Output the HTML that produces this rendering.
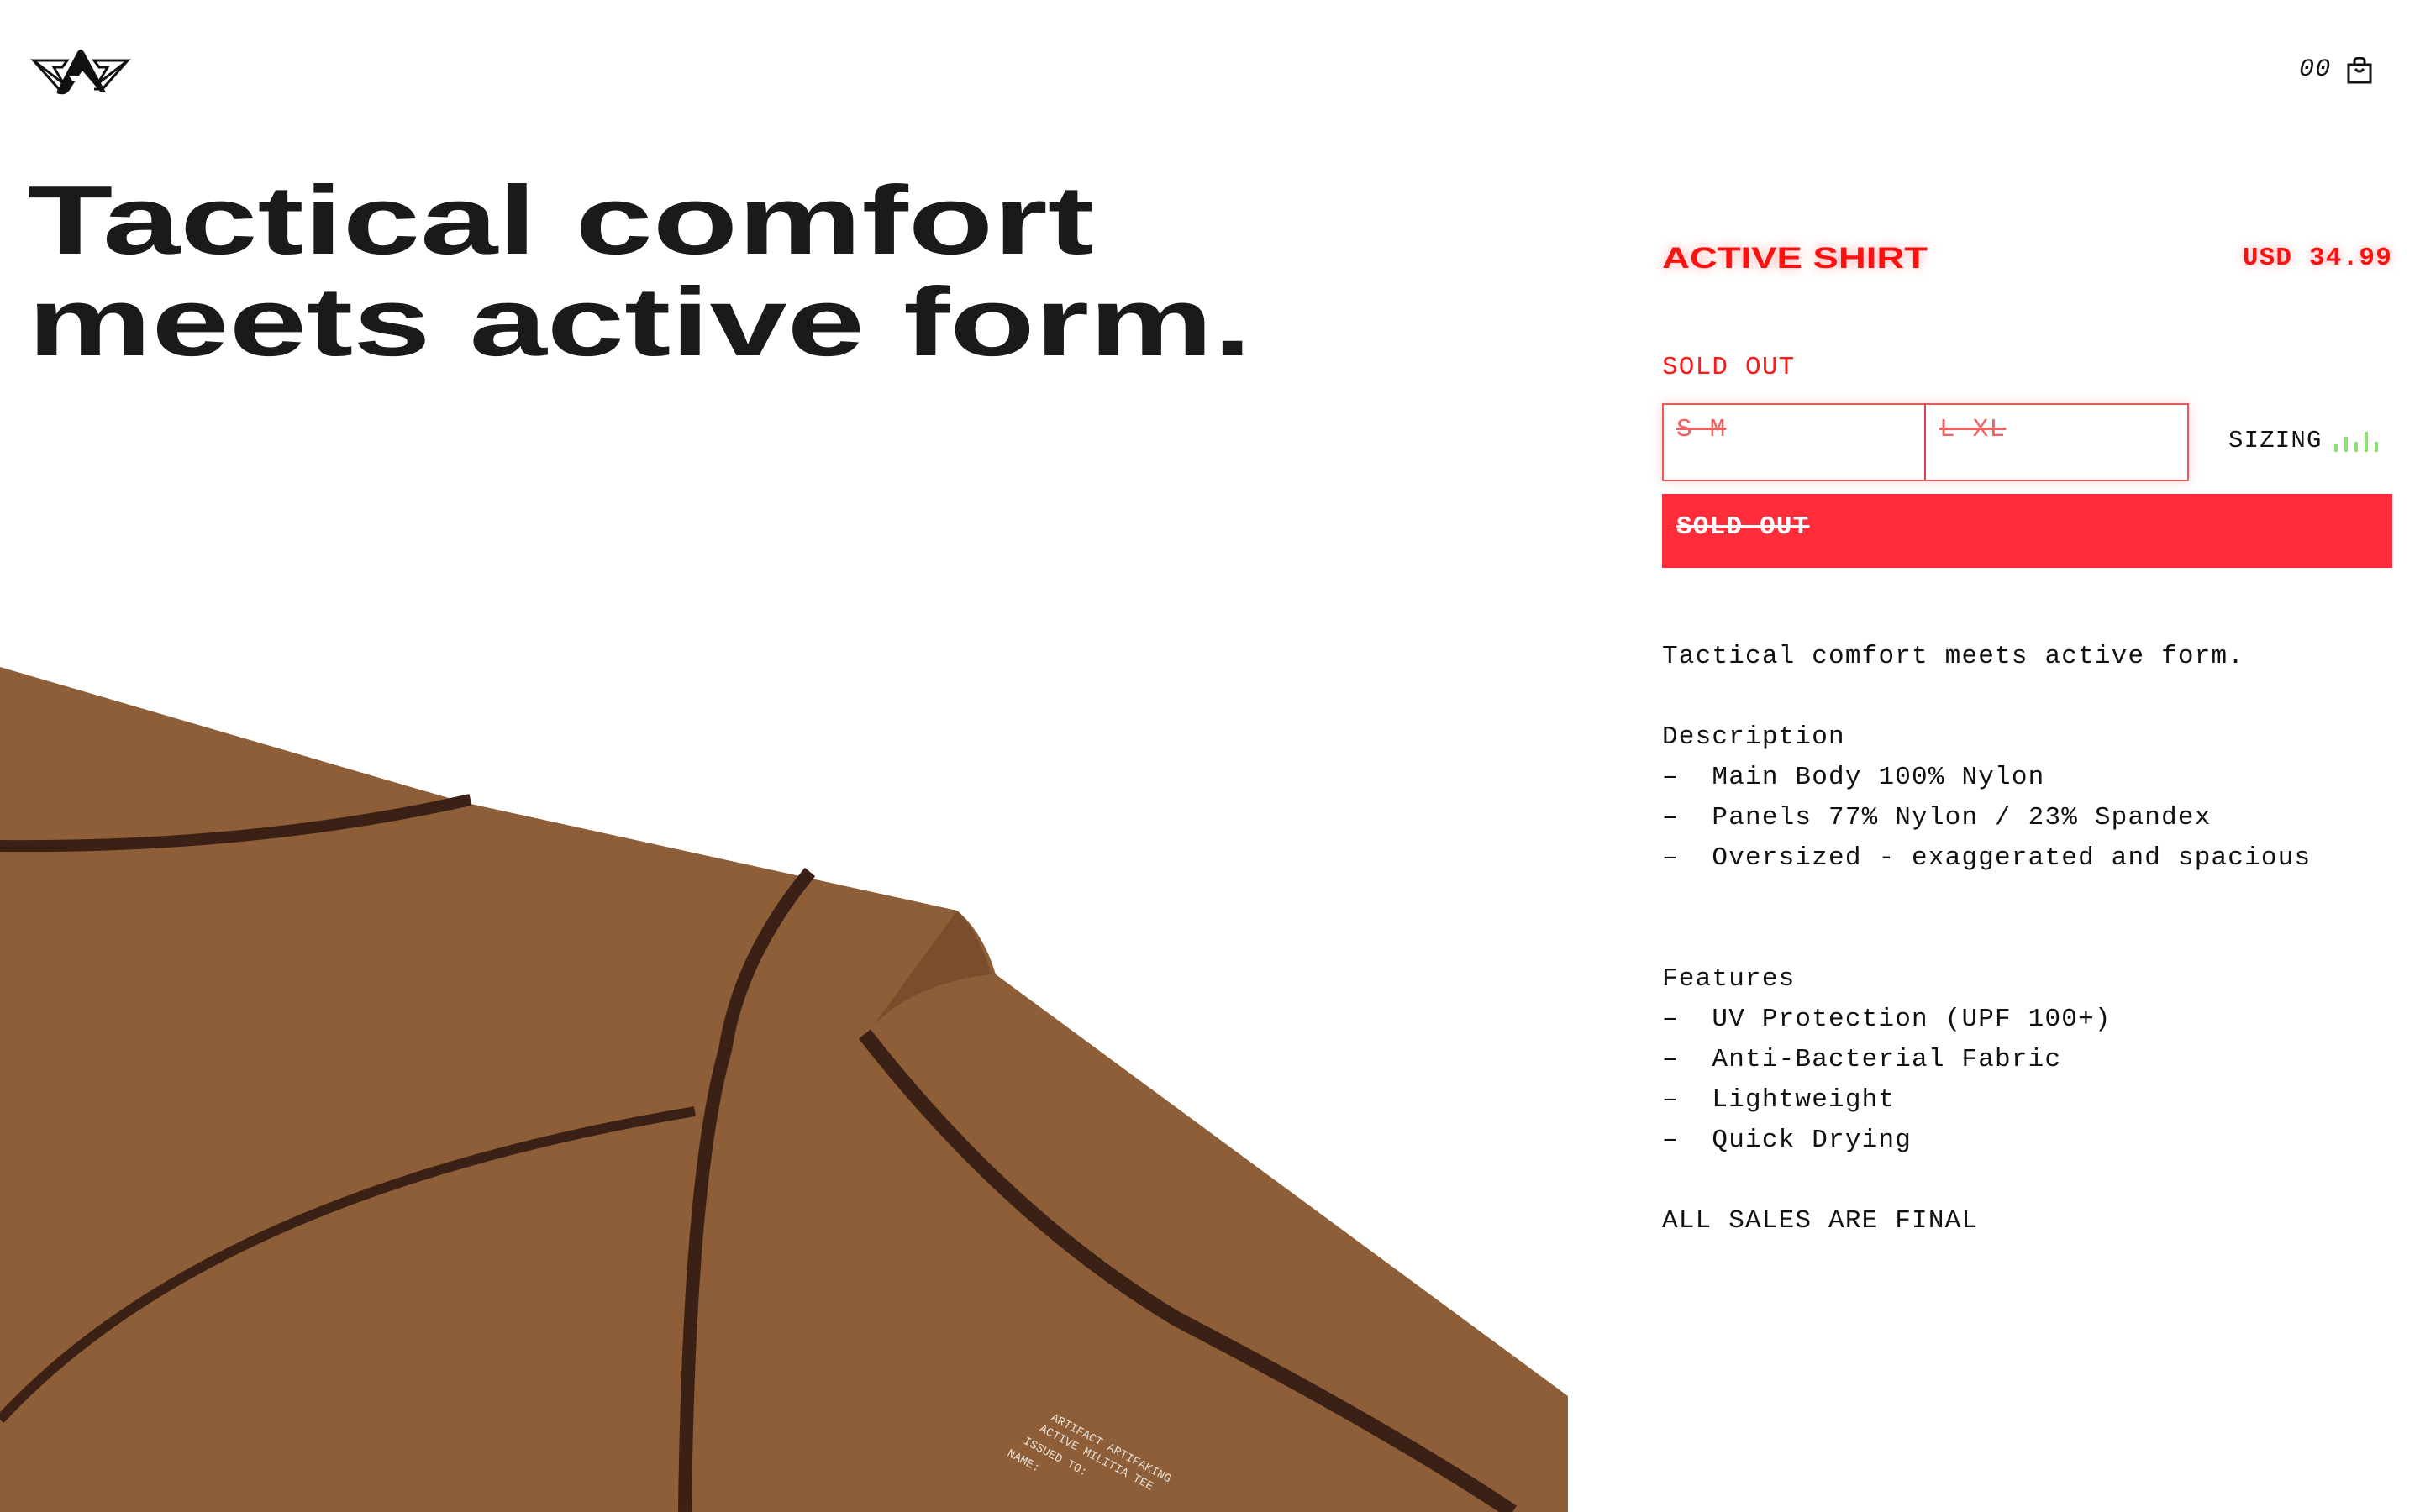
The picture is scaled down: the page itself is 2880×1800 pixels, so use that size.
<!DOCTYPE html>
<html><head><meta charset="utf-8"><style>
html,body{margin:0;padding:0;background:#fff;}
body{width:2880px;height:1800px;position:relative;overflow:hidden;font-family:"Liberation Mono",monospace;}
.h1{position:absolute;left:33px;top:202px;font-family:"Liberation Sans",sans-serif;font-weight:bold;font-size:116px;line-height:121px;color:#1a1a1a;transform:scaleX(1.43);transform-origin:0 0;letter-spacing:0px;white-space:nowrap;}
.abs{position:absolute;white-space:nowrap;}
.mono{font-family:"Liberation Mono",monospace;font-size:31px;letter-spacing:1.2px;color:#111;}
.red{color:#ff1010;text-shadow:0 0 12px rgba(255,0,0,.35);}
</style></head><body>
<svg class="abs" style="left:36px;top:56px" width="120" height="62" viewBox="0 0 120 62">
<path d="M4 16 H44 L38 24 H28 L40 44 Z" fill="none" stroke="#111" stroke-width="3"/>
<path d="M4 16 L34 50 H44" fill="none" stroke="#111" stroke-width="3"/>
<path d="M116 16 H76 L82 24 H92 L80 44 Z" fill="none" stroke="#111" stroke-width="3"/>
<path d="M116 16 L86 50 H76" fill="none" stroke="#111" stroke-width="3"/>
<path d="M32 52 L56 6 Q60 0 64 6 L90 54 L84 54 L62 28 L50 46 Q44 58 36 56 Q30 56 32 52 Z" fill="#111"/>
<path d="M46 34 H66 L60 40 H50 Z" fill="#fff"/>
</svg>
<div class="abs mono" style="left:2736px;top:66px;font-size:30px;font-style:italic">00</div>
<svg class="abs" style="left:2793px;top:68px" width="30" height="32" viewBox="0 0 30 32"><rect x="2" y="9" width="26" height="21" fill="none" stroke="#111" stroke-width="3"/><path d="M9 9 V5 Q9 1 15 1 Q21 1 21 5 V9 M10 14 Q15 20 20 14" fill="none" stroke="#111" stroke-width="3"/></svg>
<div class="h1">Tactical comfort<br>meets active form.</div>

<svg class="abs" style="left:0;top:0" width="1866" height="1800" viewBox="0 0 1866 1800">
<path d="M0 794 L551 955 L1139 1084 Q1170 1110 1185 1160 L1866 1662 L1866 1800 L0 1800 Z" fill="#8d5e37"/>
<path d="M1139 1084 Q1165 1110 1180 1160 Q1090 1170 1040 1220 Z" fill="#7a4e2c"/>
<path d="M0 1007 Q300 1010 560 952" fill="none" stroke="#3b2115" stroke-width="14"/>
<path d="M964 1038 Q880 1140 863 1250 Q820 1400 815 1800" fill="none" stroke="#3b2115" stroke-width="16"/>
<path d="M0 1690 Q250 1420 827 1323" fill="none" stroke="#3b2115" stroke-width="12"/>
<path d="M1029 1231 Q1200 1450 1400 1570 Q1650 1700 1800 1800" fill="none" stroke="#3b2115" stroke-width="18"/>
<g fill="#e8e0d8" font-family="Liberation Mono" font-size="14" transform="translate(1250,1690) rotate(28)"><text x="0" y="0">ARTIFACT  ARTIFAKING</text><text x="-6" y="18">ACTIVE MILITIA TEE</text><text x="-16" y="40">ISSUED TO:</text><text x="-26" y="62">NAME:</text></g>
</svg>

<div class="abs red" style="left:1978px;top:288px;font-family:'Liberation Sans',sans-serif;font-weight:bold;font-size:35px;transform:scaleX(1.3);transform-origin:0 0;">ACTIVE SHIRT</div>
<div class="abs mono red" style="right:33px;top:290px;font-size:31px;font-weight:bold;letter-spacing:1.2px">USD 34.99</div>
<div class="abs mono" style="left:1978px;top:420px;color:#ff1a1a">SOLD OUT</div>
<div class="abs" style="left:1978px;top:480px;width:623px;height:89px;border:2px solid #e85a5a;box-shadow:0 0 14px rgba(255,60,60,.2)"></div>
<div class="abs" style="left:2290px;top:480px;width:2px;height:93px;background:#d84848"></div>
<div class="abs mono" style="left:1995px;top:494px;color:#f06060;text-decoration:line-through">S-M</div>
<div class="abs mono" style="left:2308px;top:494px;color:#f06060;text-decoration:line-through">L-XL</div>
<div class="abs mono" style="left:2652px;top:508px;font-size:29px">SIZING</div>
<svg class="abs" style="left:2776px;top:510px" width="60" height="30"><g stroke="#8fe070" stroke-width="4"><line x1="4" y1="18" x2="4" y2="28"/><line x1="16" y1="10" x2="16" y2="28"/><line x1="28" y1="16" x2="28" y2="28"/><line x1="40" y1="4" x2="40" y2="28"/><line x1="52" y1="16" x2="52" y2="28"/></g></svg>
<div class="abs" style="left:1978px;top:588px;width:869px;height:88px;background:#ff2d3a"></div>
<div class="abs mono" style="left:1995px;top:610px;color:#fff;font-weight:bold;text-decoration:line-through">SOLD OUT</div>

<div class="abs mono" style="left:1978px;top:758px;line-height:48px;white-space:pre">Tactical comfort meets active form.

Description
–  Main Body 100% Nylon
–  Panels 77% Nylon / 23% Spandex
–  Oversized - exaggerated and spacious


Features
–  UV Protection (UPF 100+)
–  Anti-Bacterial Fabric
–  Lightweight
–  Quick Drying

ALL SALES ARE FINAL</div>
</body></html>
